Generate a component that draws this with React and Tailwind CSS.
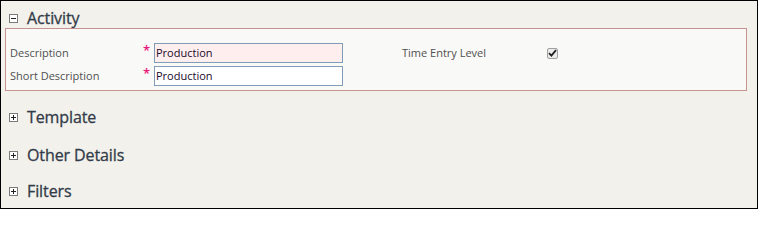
export default function App() {
  const font = { fontFamily: '"Open Sans", "Noto Sans", sans-serif' }

  const Toggle = ({ open }) => (
    <span className="inline-flex w-[9px] h-[9px] border border-[#7a7a7a] bg-white items-center justify-center relative">
      <span className="absolute w-[5px] h-px bg-[#222]" />
      {!open && <span className="absolute h-[5px] w-px bg-[#222]" />}
    </span>
  )

  const Heading = ({ label, open, className }) => (
    <div className={"flex items-center gap-[9px] pl-[8px] " + className}>
      <Toggle open={open} />
      <span className="text-[16px] tracking-[-0.1px] text-[#323b49] leading-none [-webkit-text-stroke:0.3px_#323b49]">{label}</span>
    </div>
  )

  return (
    <div className="w-[758px] h-[209px] border border-black bg-[#f2f1eb] overflow-hidden" style={font}>
      <Heading label="Activity" open className="pt-[8px] h-[26px]" />

      <div className="mx-[4px] mt-[1px] w-[742px] h-[63px] border border-[#c79391] bg-[#f9f9f7] pt-[14px] pl-[4px]">
        <div className="flex items-center h-[20px]">
          <span className="w-[133px] text-[11px] text-[#505050] pt-px">Description</span>
          <span className="w-[11px] text-[13px] font-semibold text-[#e8177c] leading-none -mt-[6px]">*</span>
          <div className="w-[189px] h-[20px] border border-[#7f9db9] bg-[#ffeeee] pl-[1px] flex items-center text-[11px] text-[#1a0a2a]">Production</div>
          <span className="ml-[59px] text-[11px] text-[#505050] pt-px">Time Entry Level</span>
          <span className="ml-[61px] w-[11px] h-[11px] rounded-[2px] border border-[#a0a0a0] bg-[#ececec] flex items-center justify-center">
            <svg width="9" height="8" viewBox="0 0 9 8">
              <path d="M1 4.2 L3.4 6.6 L8 1.2" stroke="#222" strokeWidth="1.8" fill="none" />
            </svg>
          </span>
        </div>
        <div className="flex items-center h-[20px] mt-[3px]">
          <span className="w-[133px] text-[11px] text-[#505050]">Short Description</span>
          <span className="w-[11px] text-[13px] font-semibold text-[#e8177c] leading-none -mt-[6px]">*</span>
          <div className="w-[189px] h-[20px] border border-[#7f9db9] bg-white pl-[1px] flex items-center text-[11px] text-[#1a0a2a]">Production</div>
        </div>
      </div>

      <Heading label="Template" className="mt-[16px] h-[20px]" />
      <Heading label="Other Details" className="mt-[18px] h-[20px]" />
      <Heading label="Filters" className="mt-[16px] h-[20px]" />
    </div>
  )
}
